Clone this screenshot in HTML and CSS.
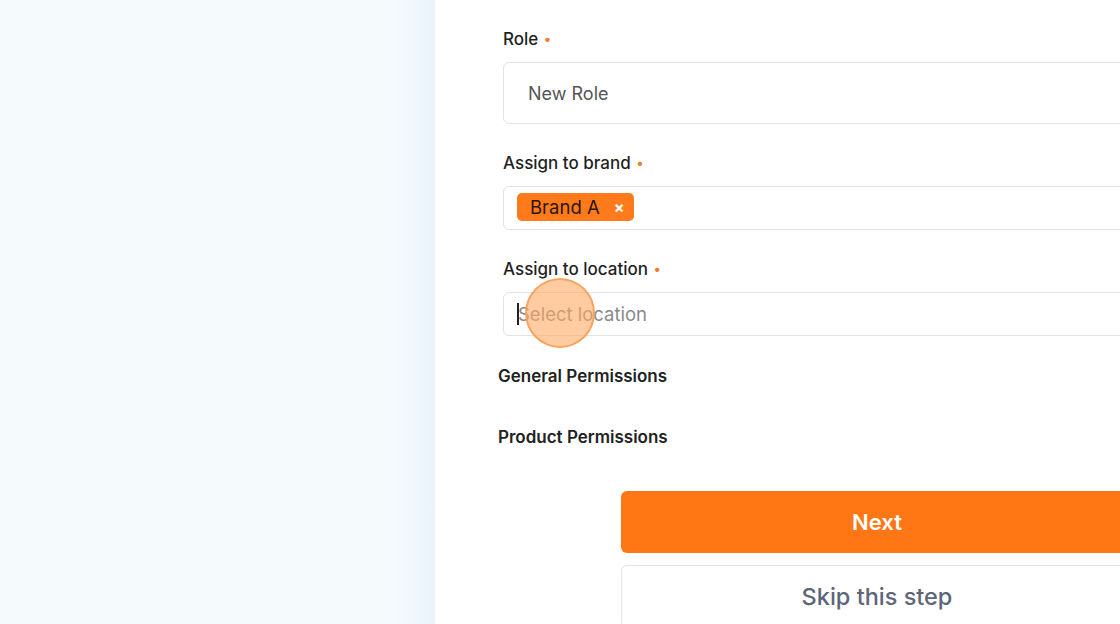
FILE: index.html
```html
<!DOCTYPE html>
<html lang="en">
<head>
<meta charset="utf-8">
<title>New Role</title>
<meta name="viewport" content="width=device-width,initial-scale=1">
<link rel="stylesheet" href="styles.css">
</head>
<body>

<aside class="side"></aside>

<main class="panel">
  <form class="form">
    <div class="field">
      <label class="label">Role <span class="req">•</span></label>
      <div class="input input-tall">New Role</div>
    </div>

    <div class="field">
      <label class="label">Assign to brand <span class="req">•</span></label>
      <div class="input input-tags">
        <span class="chip">Brand A <span class="chip-x">×</span></span>
      </div>
    </div>

    <div class="field">
      <label class="label">Assign to location <span class="req">•</span></label>
      <div class="input input-select">
        <span class="caret"></span><span class="placeholder">Select location</span>
        <span class="tap"></span>
      </div>
    </div>

    <h3 class="perm perm-general">General Permissions</h3>
    <h3 class="perm perm-product">Product Permissions</h3>

    <div class="actions">
      <button type="button" class="btn btn-primary">Next</button>
      <button type="button" class="btn btn-ghost">Skip this step</button>
    </div>
  </form>
</main>

</body>
</html>
```

FILE: styles.css
```css
/* Reset & Base */
*,*::before,*::after{box-sizing:border-box;margin:0;padding:0}
html,body{height:100%}
body{
  font-family:Inter,"Noto Sans",Arial,sans-serif;
  color:#222;
  display:flex;
  overflow:hidden;
  background:#fff;
}

/* Left side */
.side{
  flex:0 0 435px;
  background:linear-gradient(90deg,#f5fafd 0,#f5fafd 395px,#eaf3fb 435px);
}

/* Right panel */
.panel{
  flex:1 0 auto;
  background:#fff;
  padding:26px 0 0 68px;
}
.form{width:700px}

/* Fields */
.field{margin-bottom:26px;position:relative}
.label{
  display:block;
  height:26px;
  font-size:17px;line-height:26px;font-weight:500;
  color:#1f1f1f;
  margin-bottom:10px;
}
.req{color:#f27b2c;font-size:14px;line-height:0;vertical-align:1px;margin-left:1px}

.input{
  width:700px;
  border:1px solid #e3e3e3;
  border-radius:6px;
  background:#fff;
  display:flex;align-items:center;
  font-size:18px;
}
.input-tall{height:62px;padding-left:24px;color:#555}
.input-tags{height:44px;padding:6px 0 0 13px;align-items:flex-start}
.input-select{height:44px;padding-left:13px;position:relative;font-size:18.5px}

/* Chip */
.chip{
  display:inline-flex;align-items:center;
  height:28px;
  padding:0 9px 0 13px;
  background:#ff7a1a;
  border-radius:5px;
  color:#2b160a;
  font-size:18.5px;
}
.chip-x{color:#fff;font-size:16px;font-weight:700;margin-left:14px}

/* Select */
.caret{width:2px;height:22px;background:#222;margin-right:-1px}
.placeholder{color:#8a8a8a}
.tap{
  position:absolute;
  left:21px;top:-15px;
  width:70px;height:70px;
  border-radius:50%;
  background:rgba(255,168,96,.6);
  border:2px solid rgba(247,158,86,.85);
}

/* Permissions */
.perm{
  height:24px;
  font-size:17px;line-height:24px;font-weight:600;
  color:#222;
  margin-left:-5px;
}
.perm-general{margin-top:28px}
.perm-product{margin-top:37px}

/* Buttons */
.actions{
  display:flex;flex-direction:column;gap:12px;
  margin:42px 0 0 118px;
  width:512px;
}
.btn{
  font-family:inherit;
  height:62px;
  border-radius:6px;
  font-size:22px;
  cursor:pointer;
}
.btn-primary{background:#ff7714;border:0;color:#fff;font-weight:600}
.btn-ghost{background:#fff;border:1px solid #e3e3e3;color:#5d6679;font-weight:500;font-size:23.5px}
```
